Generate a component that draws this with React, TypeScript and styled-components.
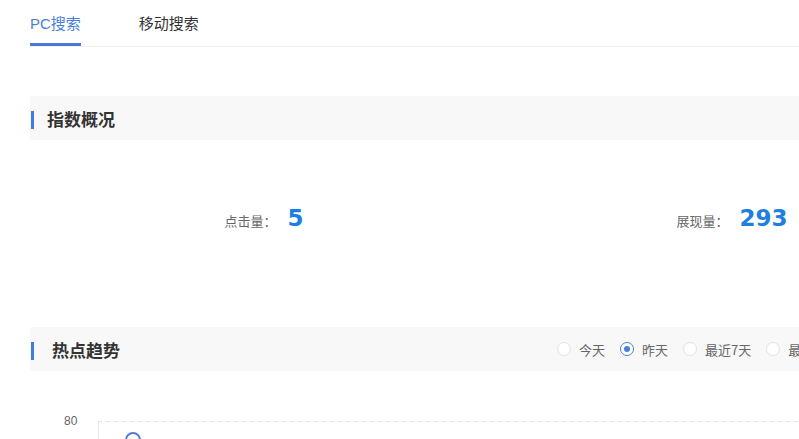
import React, { useState } from "react";
import styled, { createGlobalStyle } from "styled-components";

const GlobalStyle = createGlobalStyle`
  html, body {
    margin: 0;
    padding: 0;
    background: #ffffff;
    overflow: hidden;
  }
  body {
    font-family: "Liberation Sans", "Noto Sans CJK SC", sans-serif;
  }
`;

const tabs = ["PC搜索", "移动搜索"];
const ranges = ["今天", "昨天", "最近7天", "最近30天"];
const stats = [
  { label: "点击量：", value: "5" },
  { label: "展现量：", value: "293" },
];

const App: React.FC = () => {
  const [tab, setTab] = useState(0);
  const [range, setRange] = useState(1);

  return (
    <>
      <GlobalStyle />
      <Page>
        {/* Tabs */}
        <TabBar>
          {tabs.map((t, i) => (
            <Tab key={t} active={i === tab} onClick={() => setTab(i)}>
              {t}
            </Tab>
          ))}
        </TabBar>

        <Content>
          <SectionHeader>
            <SectionTitle>指数概况</SectionTitle>
          </SectionHeader>

          <StatsRow>
            {stats.map((s) => (
              <StatCell key={s.label}>
                <StatLabel>{s.label}</StatLabel>
                <StatValue>{s.value}</StatValue>
              </StatCell>
            ))}
          </StatsRow>

          <SectionHeader>
            <SectionTitle indent>热点趋势</SectionTitle>
            <RadioGroup>
              {ranges.map((r, i) => (
                <RadioOption key={r} onClick={() => setRange(i)}>
                  <RadioDot checked={i === range} />
                  {r}
                </RadioOption>
              ))}
            </RadioGroup>
          </SectionHeader>

          <Chart>
            <AxisLabel>80</AxisLabel>
            <svg width="880" height="30" viewBox="0 0 880 30">
              <line x1="0" y1="0.5" x2="880" y2="0.5" stroke="#dfe3ea" strokeDasharray="4 4" />
              <line x1="0.5" y1="0" x2="0.5" y2="30" stroke="#e6e6e6" />
              <circle cx="35" cy="19" r="7" fill="#fff" stroke="#5a78d8" strokeWidth="2" />
            </svg>
          </Chart>
        </Content>
      </Page>
    </>
  );
};

export default App;

/* Styled Components */
const Page = styled.div`
  width: 100vw;
  height: 100vh;
  overflow: hidden;
  padding-left: 30px;
  box-sizing: border-box;
`;

const TabBar = styled.div`
  display: flex;
  gap: 58px;
  height: 46px;
  border-bottom: 1px solid #f0f0f0;
  width: 1200px;
`;

const Tab = styled.div<{ active: boolean }>`
  display: flex;
  align-items: center;
  height: 46px;
  box-sizing: border-box;
  padding-top: 2px;
  font-size: 15px;
  color: ${({ active }) => (active ? "#4a7fd6" : "#333")};
  border-bottom: 3px solid ${({ active }) => (active ? "#4a78d6" : "transparent")};
  cursor: pointer;
`;

const Content = styled.div`
  width: 1100px;
  padding-top: 49px;
`;

const SectionHeader = styled.div`
  display: flex;
  align-items: center;
  height: 44px;
  background: #f8f8f8;
  position: relative;
  padding-right: 120px;

  &::before {
    content: "";
    position: absolute;
    left: 1px;
    top: 15px;
    width: 3px;
    height: 18px;
    background: #3d7ee0;
  }
`;

const SectionTitle = styled.div<{ indent?: boolean }>`
  padding-left: ${({ indent }) => (indent ? "22px" : "17px")};
  font-size: 17px;
  font-weight: bold;
  color: #333;
  font-family: "Noto Sans CJK SC", sans-serif;
`;

const StatsRow = styled.div`
  display: grid;
  grid-template-columns: repeat(2, 468px);
  height: 40px;
  margin: 58px 0 89px;
`;

const StatCell = styled.div`
  display: flex;
  align-items: center;
  justify-content: center;
  gap: 11px;
`;

const StatLabel = styled.span`
  font-size: 13px;
  color: #666;
  font-family: "Noto Sans CJK SC", sans-serif;
  padding-top: 5px;
`;

const StatValue = styled.span`
  font-family: "DejaVu Sans", sans-serif;
  font-weight: bold;
  font-size: 23px;
  color: #1e7fe0;
`;

const RadioGroup = styled.div`
  display: flex;
  align-items: center;
  margin-left: 437px;
  gap: 15px;
`;

const RadioOption = styled.label`
  display: flex;
  align-items: center;
  gap: 8px;
  font-size: 13px;
  color: #666;
  cursor: pointer;
  font-family: "Noto Sans CJK SC", sans-serif;
`;

const RadioDot = styled.span<{ checked: boolean }>`
  width: 12px;
  height: 12px;
  border-radius: 50%;
  border: 1px solid ${({ checked }) => (checked ? "#4a7fd6" : "#e2e2e2")};
  background: #fff;
  position: relative;

  &::after {
    content: "";
    display: ${({ checked }) => (checked ? "block" : "none")};
    position: absolute;
    left: 3px;
    top: 3px;
    width: 6px;
    height: 6px;
    border-radius: 50%;
    background: #4a7fd6;
  }
`;

const Chart = styled.div`
  display: flex;
  align-items: flex-start;
  margin-top: 50px;
  gap: 20px;
  padding-left: 34px;
`;

const AxisLabel = styled.span`
  font-size: 12px;
  color: #666;
  line-height: 1;
  width: 14px;
  margin-top: -6px;
`;
